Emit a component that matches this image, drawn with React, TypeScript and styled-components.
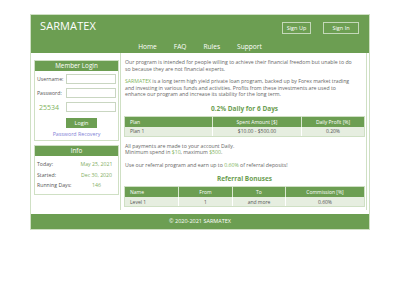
import styled, { createGlobalStyle } from 'styled-components';

const GREEN = '#6c9e52';
const LIGHT = '#cfe0c4';
const ACCENT = '#7fb360';

const GlobalStyle = createGlobalStyle`
  body {
    margin: 0;
    background: #fff;
    font-family: "Open Sans", "Noto Sans", sans-serif;
  }
`;

const plans = [{ name: 'Plan 1', amount: '$10.00 - $500.00', profit: '0.20%' }];
const levels = [{ name: 'Level 1', from: '1', to: 'and more', commission: '0.60%' }];

export default function App() {
  return (
    <>
      <GlobalStyle />
      <Page>
        <Header>
          <TopRow>
            <Logo>SARMATEX</Logo>
            <Actions>
              <HeaderButton $w={29}>Sign Up</HeaderButton>
              <HeaderButton $w={36}>Sign In</HeaderButton>
            </Actions>
          </TopRow>
          <Nav>
            <NavLink>Home</NavLink>
            <NavLink>FAQ</NavLink>
            <NavLink>Rules</NavLink>
            <NavLink>Support</NavLink>
          </Nav>
        </Header>

        <Body>
          <Sidebar>
            <Box>
              <BoxTitle>Member Login</BoxTitle>
              <LoginForm>
                <Label>Username:</Label>
                <Input />
                <Label>Password:</Label>
                <Input type="password" />
                <Captcha>25534</Captcha>
                <Input />
                <span />
                <LoginButton>Login</LoginButton>
              </LoginForm>
              <Recovery>Password Recovery</Recovery>
            </Box>

            <Box $gap>
              <BoxTitle>Info</BoxTitle>
              <InfoGrid>
                <Label>Today:</Label>
                <InfoValue>May 25, 2021</InfoValue>
                <Label>Started:</Label>
                <InfoValue>Dec 30, 2020</InfoValue>
                <Label>Running Days:</Label>
                <InfoValue>146</InfoValue>
              </InfoGrid>
            </Box>
          </Sidebar>

          <Main>
            <Paragraph>
              Our program is intended for people willing to achieve their financial freedom but unable to do
              <br />
              so because they are not financial experts.
            </Paragraph>
            <Paragraph>
              <Accent>SARMATEX</Accent> is a long term high yield private loan program, backed up by Forex market trading
              <br />
              and investing in various funds and activities. Profits from these investments are used to
              <br />
              enhance our program and increase its stability for the long term.
            </Paragraph>

            <SectionTitle>0.2% Daily for 6 Days</SectionTitle>
            <Table>
              <colgroup>
                <col style={{ width: 88 }} />
                <col style={{ width: 89 }} />
                <col />
              </colgroup>
              <thead>
                <tr>
                  <Th $left>Plan</Th>
                  <Th>Spent Amount [$]</Th>
                  <Th>Daily Profit [%]</Th>
                </tr>
              </thead>
              <tbody>
                {plans.map((p) => (
                  <tr key={p.name}>
                    <Td $left>{p.name}</Td>
                    <Td>{p.amount}</Td>
                    <Td>{p.profit}</Td>
                  </tr>
                ))}
              </tbody>
            </Table>

            <Paragraph $top={6}>
              All payments are made to your account Daily.
              <br />
              Minimum spend in <Accent>$10</Accent>, maximum <Accent>$500</Accent>.
            </Paragraph>
            <Paragraph>
              Use our referral program and earn up to <Accent>0.60%</Accent> of referral deposits!
            </Paragraph>

            <SectionTitle>Referral Bonuses</SectionTitle>
            <Table>
              <colgroup>
                <col style={{ width: 54 }} />
                <col style={{ width: 54 }} />
                <col style={{ width: 53 }} />
                <col />
              </colgroup>
              <thead>
                <tr>
                  <Th $left>Name</Th>
                  <Th>From</Th>
                  <Th>To</Th>
                  <Th>Commission [%]</Th>
                </tr>
              </thead>
              <tbody>
                {levels.map((l) => (
                  <tr key={l.name}>
                    <Td $left>{l.name}</Td>
                    <Td>{l.from}</Td>
                    <Td>{l.to}</Td>
                    <Td>{l.commission}</Td>
                  </tr>
                ))}
              </tbody>
            </Table>
          </Main>
        </Body>

        <Footer>© 2020-2021 SARMATEX</Footer>
      </Page>
    </>
  );
}

const Page = styled.div`
  width: 338px;
  margin: 14px auto 0;
  border: 1px solid ${LIGHT};
  background: #fff;
`;

const Header = styled.header`
  height: 38px;
  background: ${GREEN};
  display: flex;
  flex-direction: column;
`;

const TopRow = styled.div`
  height: 24px;
  padding: 5px 10px 0 9px;
  box-sizing: border-box;
  display: flex;
  justify-content: space-between;
  align-items: flex-start;
`;

const Logo = styled.div`
  color: #fff;
  font-size: 11px;
  line-height: 12px;
  letter-spacing: 0.1px;
`;

const Actions = styled.div`
  display: flex;
  gap: 12px;
  margin-top: 2px;
`;

const HeaderButton = styled.button<{ $w: number }>`
  width: ${({ $w }) => $w}px;
  height: 12px;
  padding: 0;
  background: transparent;
  border: 1px solid rgba(255, 255, 255, 0.6);
  color: #fff;
  font-family: inherit;
  font-size: 5.5px;
  line-height: 10px;
`;

const Nav = styled.nav`
  height: 14px;
  display: flex;
  justify-content: center;
  align-items: center;
  gap: 17px;
`;

const NavLink = styled.span`
  color: #fff;
  font-size: 6.6px;
`;

const Body = styled.div`
  display: flex;
  margin-right: 2px;
`;

const Sidebar = styled.aside`
  width: 89px;
  padding: 7px 1px 0 3px;
  box-sizing: border-box;
`;

const Box = styled.div<{ $gap?: boolean }>`
  border: 1px solid ${LIGHT};
  margin-top: ${({ $gap }) => ($gap ? '4px' : '0')};
  padding-bottom: 1px;
`;

const BoxTitle = styled.div`
  height: 10px;
  background: ${GREEN};
  color: #fff;
  font-size: 6.3px;
  line-height: 10px;
  text-align: center;
`;

const LoginForm = styled.div`
  display: grid;
  grid-template-columns: 29px 50px;
  grid-auto-rows: 14px;
  align-items: center;
  padding: 1px 1px 0 2px;
`;

const Label = styled.span`
  color: #555;
  font-size: 5.2px;
  white-space: nowrap;
`;

const Input = styled.input`
  box-sizing: border-box;
  width: 50px;
  height: 10px;
  margin: 0;
  border: 1px solid #c9d6c1;
  background: #fff;
  padding: 0 2px;
`;

const Captcha = styled.span`
  color: ${ACCENT};
  font-size: 7px;
  padding-left: 2px;
`;

const LoginButton = styled.button`
  align-self: end;
  width: 31px;
  height: 10px;
  padding: 0;
  border: none;
  background: ${GREEN};
  color: #fff;
  font-family: inherit;
  font-size: 5.5px;
`;

const Recovery = styled.div`
  margin-top: 2px;
  height: 9px;
  line-height: 9px;
  text-align: center;
  color: #8282d6;
  font-size: 5.3px;
`;

const InfoGrid = styled.div`
  display: grid;
  grid-template-columns: 43px 33px;
  grid-auto-rows: 10.5px;
  align-items: center;
  padding: 3px 4px 2px 2px;
`;

const InfoValue = styled.span`
  color: #7fae62;
  font-size: 5.2px;
  text-align: center;
  white-space: nowrap;
`;

const Main = styled.main`
  flex: 1;
  border-left: 1px solid ${LIGHT};
  border-right: 1px solid ${LIGHT};
  padding: 6px 1px 3px 3px;
`;

const Paragraph = styled.p<{ $top?: number }>`
  margin: ${({ $top }) => ($top ? `${$top}px` : '0')} 0 6px;
  color: #666;
  font-size: 5.2px;
  line-height: 6.5px;
  padding-left: 1px;
`;

const Accent = styled.span`
  color: ${ACCENT};
`;

const SectionTitle = styled.h3`
  margin: 7px 0 3px;
  color: ${GREEN};
  font-size: 6.5px;
  line-height: 8px;
  font-weight: bold;
  text-align: center;
`;

const Table = styled.table`
  width: 241px;
  border-collapse: collapse;
  table-layout: fixed;
  border: 1px solid ${LIGHT};
`;

const Th = styled.th<{ $left?: boolean }>`
  height: 10px;
  padding: 0 0 0 ${({ $left }) => ($left ? '5px' : '0')};
  background: ${GREEN};
  color: #fff;
  font-size: 5px;
  font-weight: normal;
  text-align: ${({ $left }) => ($left ? 'left' : 'center')};
  border-left: 1px solid #d9e7cf;
  &:first-child {
    border-left: none;
  }
`;

const Td = styled.td<{ $left?: boolean }>`
  height: 9px;
  padding: 0 0 0 ${({ $left }) => ($left ? '5px' : '0')};
  background: #e6eee0;
  color: #555;
  font-size: 5px;
  text-align: ${({ $left }) => ($left ? 'left' : 'center')};
  border-left: 1px solid #fff;
  border-bottom: 1px solid ${LIGHT};
  &:first-child {
    border-left: none;
  }
`;

const Footer = styled.footer`
  margin-top: 4px;
  height: 15px;
  background: ${GREEN};
  color: #fff;
  font-size: 5.5px;
  line-height: 15px;
  text-align: center;
`;
